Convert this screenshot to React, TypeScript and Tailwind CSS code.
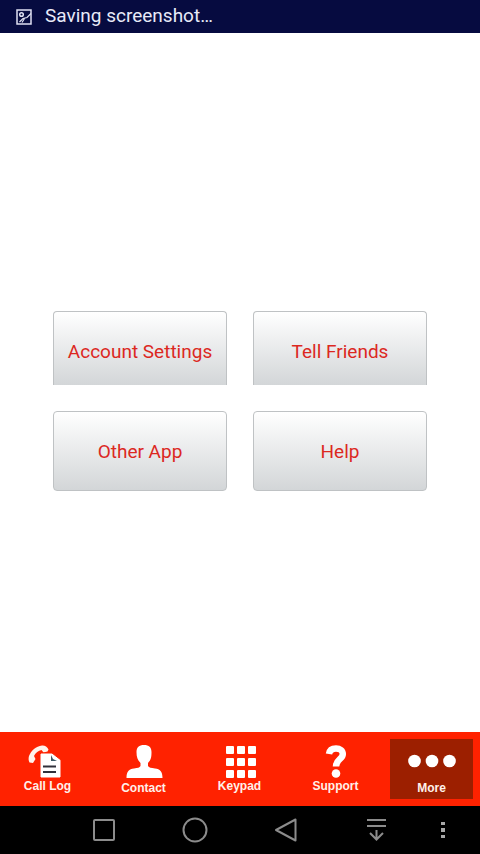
import React from 'react';

const menuItems = [
  { label: 'Account Settings', cut: true },
  { label: 'Tell Friends', cut: true },
  { label: 'Other App', cut: false },
  { label: 'Help', cut: false },
];

const keypadRows = [7, 19, 31];
const keypadCols = [28, 39, 50];

const CallLogIcon = () => (
  <svg className="w-[83px] h-10" viewBox="0 0 83 40" aria-hidden="true">
    <path
      d="M23 17c2-5 7-10 13-10.500c3-.2 5 1 6.500 4l-1 2l-4 1l-2-2.500c-3 .5-6 3-7.500 6l1.500 3l-2.500 4l-3.500-.5c-1-2-1.200-4-.5-6.500z"
      fill="#fff3ec"
    />
    <path d="M35 14h11l9 7v17l-1 1H35l-1-1V15z" fill="#fff" stroke="#ff2200" />
    <path d="M45 16v6h6l-4-2z" fill="#3d5a66" />
    <path d="M37 27.500h13M37 33h13" stroke="#30303a" strokeWidth="2" />
  </svg>
);

const ContactIcon = () => (
  <svg className="w-[83px] h-[42px]" viewBox="0 0 83 42" aria-hidden="true">
    <path
      d="M42 6c5 0 7.500 2.500 7.500 7c0 5-.5 8-3.500 11v3c1 1.500 3 2 7 2.500c5 .5 7.500 3 7.500 9.500H24.500c0-6.500 2.500-9 7.500-9.500c4-.5 5.500-1 6.500-2.500v-3c-3-3-4-6-4-11c0-4.500 2.500-7 7.500-7z"
      fill="#fff"
    />
  </svg>
);

const KeypadIcon = () => (
  <svg className="w-[83px] h-10" viewBox="0 0 83 40" aria-hidden="true">
    {keypadRows.map(y =>
      keypadCols.map(x => <rect key={`${x}-${y}`} x={x} y={y} width="8" height="8" rx="1" fill="#fff" />)
    )}
  </svg>
);

const SupportIcon = () => (
  <svg className="w-[83px] h-10" viewBox="0 0 83 40" aria-hidden="true">
    <path
      d="M35 15c.5-3.500 3-5.500 7-5.500c4 0 6.800 2 6.800 5.500c0 5.500-6.800 5-6.800 12.500"
      fill="none"
      stroke="#fff"
      strokeWidth="6.500"
      strokeLinejoin="round"
    />
    <circle cx="42" cy="34.500" r="4.300" fill="#fff" />
  </svg>
);

const MoreIcon = () => (
  <svg className="w-[83px] h-[42px]" viewBox="0 0 83 42" aria-hidden="true">
    <circle cx="24.500" cy="22" r="6.300" fill="#fff" />
    <circle cx="42" cy="22" r="6.300" fill="#fff" />
    <circle cx="59.500" cy="22" r="6.300" fill="#fff" />
  </svg>
);

const tabs = [
  { label: 'Call Log', Icon: CallLogIcon, active: false },
  { label: 'Contact', Icon: ContactIcon, active: false },
  { label: 'Keypad', Icon: KeypadIcon, active: false },
  { label: 'Support', Icon: SupportIcon, active: false },
  { label: 'More', Icon: MoreIcon, active: true },
];

const navIcons = [
  { name: 'Recent apps', shape: <rect x="5" y="5" width="20" height="20" rx="1" /> },
  { name: 'Home', shape: <circle cx="15" cy="15" r="11.500" /> },
  { name: 'Back', shape: <path d="M5 15L24.500 4.500v21z" strokeLinejoin="round" /> },
  { name: 'Notifications', shape: <path d="M5 5h19M5 11h19M14.500 15v9M8 18l6.500 6.500l6.500-6.500" /> },
];

const App: React.FC = () => {
  return (
    <div className="flex flex-col min-h-screen bg-white font-[Roboto,sans-serif]">
      <header className="flex items-center h-[33px] pl-4 gap-[13px] bg-[#060b40] text-[#e8eaf8]">
        <svg className="w-4 h-4" viewBox="0 0 16 16" fill="none" stroke="#dfe1f2" strokeWidth="1.500" aria-hidden="true">
          <rect x="1" y="1" width="14" height="14" />
          <circle cx="5.500" cy="5.500" r="1.800" />
          <path d="M3.500 13l3.500-3.500l4-1l4-4M6 13.500l2.500-4" strokeWidth="1.200" />
        </svg>
        <p className="pb-0.5 text-[19px] leading-[30px]">Saving screenshot…</p>
      </header>

      <main className="flex flex-col flex-1 justify-center pt-[37px] px-[53px]">
        <div className="grid grid-cols-2 auto-rows-[80px] gap-x-[26px] gap-y-5">
          {menuItems.map(item => (
            <button
              key={item.label}
              type="button"
              className={`border-[#bfc2c4] bg-linear-to-b from-white to-[#d3d6d8] text-[#dc281f] text-[19px] ${
                item.cut ? 'h-[74px] pt-2 border-x border-t rounded-t' : 'h-20 pt-0.5 border rounded'
              }`}
            >
              {item.label}
            </button>
          ))}
        </div>
      </main>

      <nav className="flex h-[74px] py-[7px] bg-[#ff2200] font-['Liberation_Sans',Arial,sans-serif]">
        {tabs.map(({ label, Icon, active }) => (
          <button
            key={label}
            type="button"
            className={`flex flex-col flex-1 items-center ml-1.5 mr-[7px] text-xs font-bold text-[#fff0ea] ${
              active ? 'bg-[#9c1f00]' : ''
            }`}
          >
            <Icon />
            <span className="leading-[14px]">{label}</span>
          </button>
        ))}
      </nav>

      <footer className="grid grid-cols-[91fr_91fr_91fr_91fr_42fr] h-12 pl-[58px] pr-4 bg-black">
        {navIcons.map(icon => (
          <button key={icon.name} type="button" aria-label={icon.name} className="flex items-center justify-center">
            <svg className="w-[30px] h-[30px]" viewBox="0 0 30 30" fill="none" stroke="#8c8c8c" strokeWidth="2">
              {icon.shape}
            </svg>
          </button>
        ))}
        <button type="button" aria-label="Menu" className="flex items-center justify-center">
          <svg className="w-1 h-[18px]" viewBox="0 0 4 18" fill="#a8a8a8">
            <rect y="1" width="4" height="3" />
            <rect y="7" width="4" height="4" />
            <rect y="14" width="4" height="3" />
          </svg>
        </button>
      </footer>
    </div>
  );
};

export default App;
